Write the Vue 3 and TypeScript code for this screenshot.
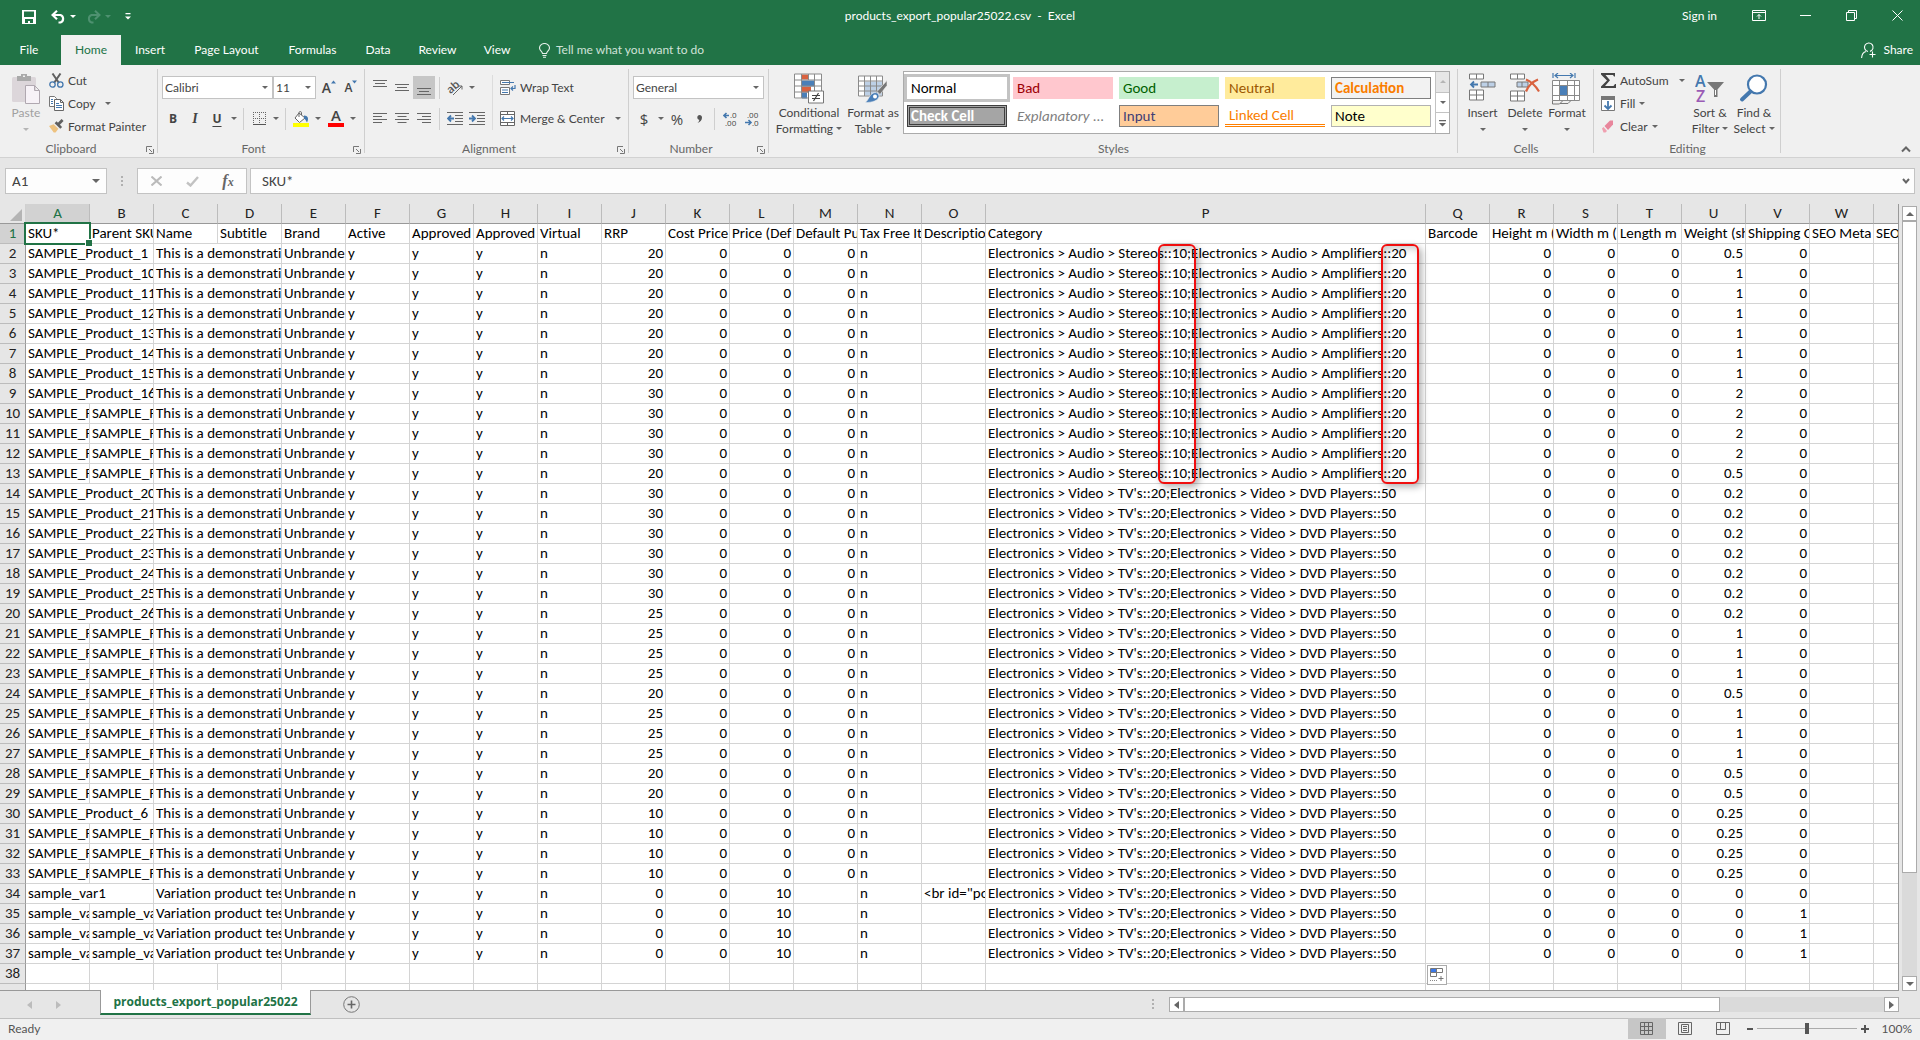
<script setup lang="ts">
interface Column {
  letter: string
  title: string
  wide?: boolean
}

interface Product {
  sku: string
  parent: string
  name: string
  active: string
  rrp: string
  price: string
  purchase: string
  description: string
  category: string
  weight: string
  shipping: string
}

const columns: Column[] = [
  { letter: 'A', title: 'SKU*' },
  { letter: 'B', title: 'Parent SKU' },
  { letter: 'C', title: 'Name' },
  { letter: 'D', title: 'Subtitle' },
  { letter: 'E', title: 'Brand' },
  { letter: 'F', title: 'Active' },
  { letter: 'G', title: 'Approved' },
  { letter: 'H', title: 'Approved' },
  { letter: 'I', title: 'Virtual' },
  { letter: 'J', title: 'RRP' },
  { letter: 'K', title: 'Cost Price' },
  { letter: 'L', title: 'Price (Def' },
  { letter: 'M', title: 'Default Pu' },
  { letter: 'N', title: 'Tax Free It' },
  { letter: 'O', title: 'Descriptio' },
  { letter: 'P', title: 'Category', wide: true },
  { letter: 'Q', title: 'Barcode' },
  { letter: 'R', title: 'Height m (' },
  { letter: 'S', title: 'Width m (' },
  { letter: 'T', title: 'Length m' },
  { letter: 'U', title: 'Weight (sh' },
  { letter: 'V', title: 'Shipping C' },
  { letter: 'W', title: 'SEO Meta' },
  { letter: '', title: 'SEO' },
]

const audio = 'Electronics > Audio > Stereos::10;Electronics > Audio > Amplifiers::20'
const video = "Electronics > Video > TV's::20;Electronics > Video > DVD Players::50"

function demo(suffix: string, rrp: number, weight: string, category: string): Product {
  return {
    sku: suffix ? 'SAMPLE_Product_' + suffix : 'SAMPLE_P',
    parent: suffix ? '' : 'SAMPLE_P',
    name: 'This is a demonstrati',
    active: 'y',
    rrp: String(rrp),
    price: '0',
    purchase: '0',
    description: '',
    category,
    weight,
    shipping: '0',
  }
}

function variation(first: boolean): Product {
  return {
    sku: first ? 'sample_var1' : 'sample_va',
    parent: first ? '' : 'sample_va',
    name: 'Variation product tes',
    active: first ? 'n' : 'y',
    rrp: '0',
    price: '10',
    purchase: '',
    description: first ? '<br id="po' : '',
    category: video,
    weight: '0',
    shipping: first ? '0' : '1',
  }
}

const products: Product[] = [
  demo('1', 20, '0.5', audio),
  ...['10', '11', '12', '13', '14', '15'].map((s) => demo(s, 20, '1', audio)),
  demo('16', 30, '2', audio),
  demo('', 30, '2', audio),
  demo('', 30, '2', audio),
  demo('', 30, '2', audio),
  demo('', 20, '0.5', audio),
  ...['20', '21', '22', '23', '24', '25'].map((s) => demo(s, 30, '0.2', video)),
  demo('26', 25, '0.2', video),
  demo('', 25, '1', video),
  demo('', 25, '1', video),
  demo('', 25, '1', video),
  demo('', 20, '0.5', video),
  demo('', 25, '1', video),
  demo('', 25, '1', video),
  demo('', 25, '1', video),
  demo('', 20, '0.5', video),
  demo('', 20, '0.5', video),
  demo('6', 10, '0.25', video),
  demo('', 10, '0.25', video),
  demo('', 10, '0.25', video),
  demo('', 10, '0.25', video),
  variation(true),
  variation(false),
  variation(false),
  variation(false),
]

const tabs = [
  { label: 'File', cls: 'tab-file' },
  { label: 'Home', cls: 'tab-home' },
  { label: 'Insert', cls: 'tab-insert' },
  { label: 'Page Layout', cls: 'tab-page' },
  { label: 'Formulas', cls: 'tab-formulas' },
  { label: 'Data', cls: 'tab-data' },
  { label: 'Review', cls: 'tab-review' },
  { label: 'View', cls: 'tab-view' },
]

const styles = [
  { label: 'Normal', cls: 'normal' },
  { label: 'Bad', cls: 'bad' },
  { label: 'Good', cls: 'good' },
  { label: 'Neutral', cls: 'neutral' },
  { label: 'Calculation', cls: 'calculation' },
  { label: 'Check Cell', cls: 'check' },
  { label: 'Explanatory ...', cls: 'explanatory' },
  { label: 'Input', cls: 'input' },
  { label: 'Linked Cell', cls: 'linked' },
  { label: 'Note', cls: 'note' },
]
</script>

<template>
  <div class="app">
    <header class="top">
      <div class="titlebar">
        <div class="quick">
          <button class="qbtn save" aria-label="Save">
            <svg width="14" height="14" viewBox="0 0 14 14"><path d="M0 0h14v14H0z" fill="#fff" /><path d="M2 1.500h10V7H2zM3 9h8v4H8v-2H6v2H3z" fill="#217346" /></svg>
          </button>
          <button class="qbtn undo" aria-label="Undo">
            <svg width="15" height="14" viewBox="0 0 15 14"><path d="M2 5h7.500a4 4 0 0 1 0 7.500H7.500M6 .8 1.500 5 6 9.200" fill="none" stroke="#fff" stroke-width="2.200" /></svg>
          </button>
          <span class="caret light"></span>
          <button class="qbtn redo" aria-label="Redo">
            <svg width="15" height="14" viewBox="0 0 15 14"><path d="M13 5H5.500a4 4 0 0 0 0 7.500H7.500M9 .8 13.500 5 9 9.200" fill="none" stroke="#4e9170" stroke-width="2" /></svg>
          </button>
          <span class="caret faint"></span>
          <button class="qbtn custom" aria-label="Customize Quick Access Toolbar">
            <svg width="6" height="7" viewBox="0 0 6 7"><path d="M.5 0h5v1.300h-5zM0 3.500h6L3 6.500z" fill="#fff" /></svg>
          </button>
        </div>
        <h1 class="doc-title">products_export_popular25022.csv&nbsp; -&nbsp; Excel</h1>
        <div class="window-controls">
          <a class="signin" href="#">Sign in</a>
          <button class="wbtn" aria-label="Ribbon Display Options">
            <svg width="14" height="11" viewBox="0 0 14 11"><path d="M.5.5h13v10H.5zM.5 2.500h13M7 9V4.500M5 6.500l2-2 2 2" fill="none" stroke="#fff" /></svg>
          </button>
          <button class="wbtn" aria-label="Minimize">
            <svg width="11" height="11" viewBox="0 0 11 11"><path d="M0 5.500h11" stroke="#fff" /></svg>
          </button>
          <button class="wbtn" aria-label="Restore">
            <svg width="11" height="11" viewBox="0 0 11 11"><path d="M.5 2.500h8v8h-8zM2.500 2.500v-2h8v8h-2" fill="none" stroke="#fff" /></svg>
          </button>
          <button class="wbtn" aria-label="Close">
            <svg width="11" height="11" viewBox="0 0 11 11"><path d="M.5.5l10 10M10.500.5l-10 10" stroke="#fff" /></svg>
          </button>
        </div>
      </div>
      <nav class="tabs">
        <button v-for="t in tabs" :key="t.label" class="tab" :class="t.cls">{{ t.label }}</button>
        <button class="tell">
          <svg width="11" height="15" viewBox="0 0 11 15"><path d="M3.500 10.500c0-2-3-3-3-5.500a5 4.500 0 0 1 10 0c0 2.500-3 3.500-3 5.500zM3.500 12.500h4M4 14.300h3" fill="none" stroke="#e4efe9" stroke-width="1.100" /></svg>
          <span>Tell me what you want to do</span>
        </button>
        <button class="share">
          <svg width="16" height="17" viewBox="0 0 16 17"><path d="M7 9.500A4.300 4.300 0 1 1 9 9.400M.6 16c.2-4 2-6 4.400-6.500M11.500 9.500v6M8.500 12.500h6" fill="none" stroke="#fff" stroke-width="1.100" /></svg>
          <span>Share</span>
        </button>
      </nav>
    </header>

    <section class="ribbon">
      <div class="group g-clipboard">
        <div class="body">
          <button class="big paste">
            <svg width="30" height="32" viewBox="0 0 30 32"><rect x="1" y="4" width="24" height="25" rx="1.500" fill="#dcd6da" /><path d="M6 3h4V1h6v2h4v5H6z" fill="#a9a9a9" /><path d="M12 2.500h2v1.500h-2z" fill="#f0f0f0" /><path d="M14.500 12.500h9l5 5v13h-14zM23.500 12.500v5h5" fill="#f7f2f7" stroke="#b0a8b0" /></svg>
            <span>Paste</span>
            <i class="caret pale"></i>
          </button>
          <div class="stack">
            <button class="small">
              <svg width="15" height="15" viewBox="0 0 15 15"><path d="M3.500.5 10 10M11.500.5 5 10" stroke="#606060" stroke-width="2" /><circle cx="3.500" cy="11.500" r="2.700" fill="none" stroke="#4478ae" stroke-width="1.300" /><circle cx="11.300" cy="11.500" r="2.700" fill="none" stroke="#4478ae" stroke-width="1.300" /></svg>
              <span>Cut</span>
            </button>
            <button class="small">
              <svg width="15" height="15" viewBox="0 0 15 15"><path d="M.5.5h5l2 2v8h-7z" fill="#fff" stroke="#777" /><path d="M5.500 3.500h6l3 3v8h-9zM11.500 3.500v3h3" fill="#fff" stroke="#666" /><path d="M2 3.500h2M2 5.500h2M2 7.500h2M7 7.500h3M7 9.500h6M7 11.500h6" stroke="#4478ae" /></svg>
              <span>Copy</span><i class="caret far"></i>
            </button>
            <button class="small">
              <svg width="16" height="15" viewBox="0 0 16 15"><path d="M0 7l5-2 5 5-3 4H5z" fill="#eec27f" /><path d="M6 4l2-2 6 6-2 2z" fill="#606060" /><path d="M10 5l4.500-4.500" stroke="#606060" stroke-width="3" /></svg>
              <span>Format Painter</span>
            </button>
          </div>
        </div>
        <div class="label">Clipboard<svg class="launch" width="8" height="8" viewBox="0 0 8 8"><path d="M.5 6V.5H6M3 3l3 3M7.500 3v4.500H3" fill="none" stroke="#777" /></svg></div>
      </div>

      <div class="group g-font">
        <div class="body rows">
          <div class="row">
            <span class="combo combo-font"><select aria-label="Font"><option>Calibri</option></select><i class="caret"></i></span>
            <span class="combo combo-size"><select aria-label="Font size"><option>11</option></select><i class="caret"></i></span>
            <button class="tool grow" aria-label="Increase Font Size"><b>A</b><svg width="5" height="4" viewBox="0 0 5 4"><path d="M0 3.500 2.500.5 5 3.500z" fill="#4478ae" /></svg></button>
            <button class="tool shrink" aria-label="Decrease Font Size"><b>A</b><svg width="5" height="4" viewBox="0 0 5 4"><path d="M0 .5 2.500 3.500 5 .5z" fill="#4478ae" /></svg></button>
          </div>
          <div class="row">
            <button class="tool bold">B</button>
            <button class="tool italic">I</button>
            <button class="tool under">U</button>
            <button class="drop" aria-label="Underline options"><i class="caret"></i></button>
            <span class="sep"></span>
            <button class="tool" aria-label="Borders"><svg width="13" height="13" viewBox="0 0 13 13"><path d="M0 .5h13M0 6.500h13M.5 0v13M6.500 0v13M12.500 0v13" stroke="#666" stroke-dasharray="1 1" /><path d="M0 12.500h13" stroke="#555" /></svg></button>
            <button class="drop" aria-label="Border options"><i class="caret"></i></button>
            <span class="sep"></span>
            <button class="tool" aria-label="Fill Color"><svg width="17" height="16" viewBox="0 0 17 16"><path d="M6 2l6 5-5.500 4.500L2 7z" fill="#fff" stroke="#666" /><path d="M6 6V1.500C6 .3 8.500.3 8.500 1.500V4" fill="none" stroke="#666" /><path d="M11 4.500c4 0 5 3 3 7-1-1-1-3-3-4z" fill="#4478ae" /><path d="M0 12h16v4H0z" fill="#ff0" /></svg></button>
            <button class="drop" aria-label="Fill options"><i class="caret"></i></button>
            <button class="tool colour" aria-label="Font Color"><b>A</b></button>
            <button class="drop" aria-label="Font color options"><i class="caret"></i></button>
          </div>
        </div>
        <div class="label">Font<svg class="launch" width="8" height="8" viewBox="0 0 8 8"><path d="M.5 6V.5H6M3 3l3 3M7.500 3v4.500H3" fill="none" stroke="#777" /></svg></div>
      </div>

      <div class="group g-align">
        <div class="body">
          <div class="rows align-left">
            <div class="row">
              <button class="tool" aria-label="Top Align"><svg width="14" height="15" viewBox="0 0 14 15"><path d="M0 .5h14M2 3.500h10M0 6.500h14" stroke="#666" /></svg></button>
              <button class="tool" aria-label="Middle Align"><svg width="14" height="15" viewBox="0 0 14 15"><path d="M0 4.500h14M2 7.500h10M0 10.500h14" stroke="#666" /></svg></button>
              <button class="tool pressed" aria-label="Bottom Align"><svg width="14" height="15" viewBox="0 0 14 15"><path d="M0 8.500h14M2 11.500h10M0 14.500h14" stroke="#666" /></svg></button>
              <span class="sep"></span>
              <button class="tool" aria-label="Orientation"><svg width="17" height="16" viewBox="0 0 17 16"><text x="0" y="11" transform="rotate(-42 6 8)" font-family="Open Sans, sans-serif" font-size="11" font-weight="600" fill="#555">ab</text><path d="M6 15 15 6M11.500 6H15v3.500" fill="none" stroke="#666" /></svg></button>
              <button class="drop" aria-label="Orientation options"><i class="caret"></i></button>
            </div>
            <div class="row">
              <button class="tool" aria-label="Align Left"><svg width="14" height="11" viewBox="0 0 14 11"><path d="M0 .5h14M0 3.500h9M0 6.500h14M0 9.500h9" stroke="#666" /></svg></button>
              <button class="tool" aria-label="Center"><svg width="14" height="11" viewBox="0 0 14 11"><path d="M0 .5h14M2.500 3.500h9M0 6.500h14M2.500 9.500h9" stroke="#666" /></svg></button>
              <button class="tool" aria-label="Align Right"><svg width="14" height="11" viewBox="0 0 14 11"><path d="M0 .5h14M5 3.500h9M0 6.500h14M5 9.500h9" stroke="#666" /></svg></button>
              <span class="sep"></span>
              <button class="tool" aria-label="Decrease Indent"><svg width="16" height="13" viewBox="0 0 16 13"><path d="M0 .5h16M8 3.500h8M8 6.500h8M8 9.500h8M0 12.500h16" stroke="#666" /><path d="M7 6.500H1M4 3.500l-3 3 3 3" fill="none" stroke="#4478ae" stroke-width="1.800" /></svg></button>
              <button class="tool" aria-label="Increase Indent"><svg width="16" height="13" viewBox="0 0 16 13"><path d="M0 .5h16M8 3.500h8M8 6.500h8M8 9.500h8M0 12.500h16" stroke="#666" /><path d="M0 6.500h6M3 3.500l3 3-3 3" fill="none" stroke="#4478ae" stroke-width="1.800" /></svg></button>
            </div>
          </div>
          <div class="rows align-right">
            <button class="row wide">
              <svg width="16" height="15" viewBox="0 0 16 15"><path d="M.5.5h9v4h-9zM.5 7.500h9v7h-9z" fill="#fff" stroke="#777" /><path d="M2 2.500h12M2 10h6M2 12.500h6M15 5v3.500h-4M13 6.500l-2 2 2 2" fill="none" stroke="#4478ae" stroke-width="1.200" /></svg>
              <span>Wrap Text</span>
            </button>
            <button class="row wide">
              <svg width="16" height="15" viewBox="0 0 16 15"><path d="M.5.5h14v14H.5zM.5 3.500h14M.5 11.500h14M7.500.5v3M7.500 11.500v3" fill="#fff" stroke="#666" /><path d="M2 7.500h11M4 5.500l-2 2 2 2M11 5.500l2 2-2 2" fill="none" stroke="#4478ae" stroke-width="1.200" /></svg>
              <span>Merge &amp; Center</span><i class="caret"></i>
            </button>
          </div>
        </div>
        <div class="label">Alignment<svg class="launch" width="8" height="8" viewBox="0 0 8 8"><path d="M.5 6V.5H6M3 3l3 3M7.500 3v4.500H3" fill="none" stroke="#777" /></svg></div>
      </div>

      <div class="group g-number">
        <div class="body rows">
          <div class="row">
            <span class="combo combo-number"><select aria-label="Number format"><option>General</option></select><i class="caret"></i></span>
          </div>
          <div class="row">
            <button class="tool sym">$</button>
            <button class="drop" aria-label="Accounting options"><i class="caret"></i></button>
            <button class="tool sym">%</button>
            <button class="tool comma" aria-label="Comma Style"><svg width="5" height="8" viewBox="0 0 5 8"><path d="M2.500 0C4 0 5 1 5 2.500 5 5 3.500 7 .5 8 2 6.500 2.300 5.500 2.200 4.700 1 4.700.3 3.500.3 2.300.3 1 1.300 0 2.500 0z" fill="#555" /></svg></button>
            <span class="sep"></span>
            <button class="tool dec" aria-label="Increase Decimal"><svg width="15" height="14" viewBox="0 0 15 14"><path d="M6 3.500H1M3.500 1 1 3.500 3.500 6" fill="none" stroke="#4478ae" stroke-width="1.600" /><g fill="#444" font-family="Open Sans, sans-serif" font-size="8"><text x="7" y="6">.0</text><text x="2" y="14">.00</text></g></svg></button>
            <button class="tool dec" aria-label="Decrease Decimal"><svg width="15" height="14" viewBox="0 0 15 14"><path d="M0 10.500h6M3.500 8 6 10.500 3.500 13" fill="none" stroke="#4478ae" stroke-width="1.600" /><g fill="#444" font-family="Open Sans, sans-serif" font-size="8"><text x="2" y="6">.00</text><text x="7" y="14">.0</text></g></svg></button>
          </div>
        </div>
        <div class="label">Number<svg class="launch" width="8" height="8" viewBox="0 0 8 8"><path d="M.5 6V.5H6M3 3l3 3M7.500 3v4.500H3" fill="none" stroke="#777" /></svg></div>
      </div>

      <div class="group g-styles">
        <div class="body">
          <button class="big cond">
            <svg width="30" height="31" viewBox="0 0 30 31"><path d="M.5.500h27v25H.500z" fill="#fff" /><path d="M8 1h6v5H8zM8 13h9v6H8z" fill="#d9623f" /><path d="M8 7h12v6H8zM8 19h5v6H8z" fill="#4a7fb8" /><path d="M.5.500h27v24H.500zM7.500.500v24M14.500.500v6M20.500.500v24M.5 6.500h27M.5 12.500h27M.5 18.500h27" fill="none" stroke="#8a8a8a" /><path d="M14.500 17.500h15v12h-15z" fill="#fff" stroke="#777" /><path d="M18 22h8M18 25h8M24.500 19.500l-5 8" stroke="#444" stroke-width="1.200" /></svg>
            <span>Conditional<br />Formatting <i class="caret"></i></span>
          </button>
          <button class="big table-style">
            <svg width="30" height="31" viewBox="0 0 30 31"><path d="M.5 2.500h24v20H.5z" fill="#fff" /><path d="M7 8h18v14H7z" fill="#bdd0e6" /><path d="M.5 2.500h24v20H.5zM6.500 2.500v20M12.500 2.500v20M18.500 2.500v20M.5 7.500h24M.5 12.500h24M.5 17.500h24" fill="none" stroke="#8a8a8a" /><path d="M29 7v5l-7 9-3-3z" fill="#777" stroke="#f0f0f0" stroke-width=".6" /><path d="M17 19c3 0 4 2 4 4-1 4-6 6-14 6 4-2 4-9 10-10z" fill="#4a7fb8" stroke="#f0f0f0" stroke-width=".6" /><circle cx="17" cy="23" r="2" fill="#fff" /></svg>
            <span>Format as<br />Table <i class="caret"></i></span>
          </button>
          <div class="gallery">
            <div class="swatches">
              <button v-for="s in styles" :key="s.label" class="swatch" :class="s.cls">{{ s.label }}</button>
            </div>
            <div class="gallery-nav">
              <button class="off" aria-label="Previous styles"><i class="caret up pale"></i></button>
              <button aria-label="Next styles"><i class="caret"></i></button>
              <button aria-label="More styles"><svg width="7" height="7" viewBox="0 0 7 7"><path d="M0 0h7v1.300H0zM0 3h7L3.500 6.500z" fill="#666" /></svg></button>
            </div>
          </div>
        </div>
        <div class="label">Styles</div>
      </div>

      <div class="group g-cells">
        <div class="body">
          <button class="big insert">
            <svg width="28" height="31" viewBox="0 0 28 31"><path d="M.5.500h14v5H.500zM7.500.500v5M.5 16.500h14v10H.500zM7.500 16.500v10M.5 21.500h14" fill="#fff" stroke="#777" /><path d="M12 8.500h14v5H12zM19 8.500v5" fill="#bdd0e6" stroke="#777" /><path d="M9 11H2M5 8l-3 3 3 3" fill="none" stroke="#4478ae" stroke-width="1.800" /></svg>
            <span>Insert</span><i class="caret"></i>
          </button>
          <button class="big delete">
            <svg width="30" height="31" viewBox="0 0 30 31"><path d="M.5.500h14v5H.500zM7.500.500v5M.5 17.500h14v10H.500zM7.500 17.500v10M.5 22.500h14" fill="#fff" stroke="#777" /><path d="M7 8.500h11v5H7zM12 8.500v5" fill="#bdd0e6" stroke="#777" /><path d="M16 6c5 2 10 7 13 12M28 6c-5 2-10 7-12 12" fill="none" stroke="#d9623f" stroke-width="2.200" /></svg>
            <span>Delete</span><i class="caret"></i>
          </button>
          <button class="big format">
            <svg width="30" height="32" viewBox="0 0 30 32"><path d="M1 0v5M23 0v5M3 2.500h18M6 0 3 2.500 6 5M18 0l3 2.500L18 5" fill="none" stroke="#4478ae" stroke-width="1.200" /><path d="M.5 7.500h27v20H.5zM7.500 7.500v20M15.500 7.500v20M22.500 7.500v20M.5 12.500h27M.5 22.500h27" fill="#fff" stroke="#8a8a8a" /><path d="M8 13h7v9H8z" fill="#4a7fb8" /><path d="M.5 27.500v3.500h7l3-3M8 30.500h8l3-3" fill="none" stroke="#777" /></svg>
            <span>Format</span><i class="caret"></i>
          </button>
        </div>
        <div class="label">Cells</div>
      </div>

      <div class="group g-editing">
        <div class="body">
          <div class="stack">
            <button class="small autosum">
              <svg width="15" height="15" viewBox="0 0 15 15"><path d="M0 0h14v3.500h-1L12 2H4.500L9 7.200 4 13h8.500L14 11h1v4H0v-1.500L6 7.500 0 1.500z" fill="#444" /></svg>
              <span>AutoSum</span><i class="caret far"></i>
            </button>
            <button class="small">
              <svg width="15" height="16" viewBox="0 0 15 16"><path d="M.5.500h13v14H.500z" fill="#fff" stroke="#777" /><path d="M0 0h14v4H0z" fill="#777" /><path d="M7 5v8M3.500 9.500 7 13l3.500-3.500" fill="none" stroke="#4478ae" stroke-width="1.800" /></svg>
              <span>Fill</span><i class="caret"></i>
            </button>
            <button class="small">
              <svg width="15" height="15" viewBox="0 0 15 15"><path d="M3.500 7 9 1.500h3v4L7 11z" fill="#e8869c" /><path d="M1 9.500 2.500 8 6 12l-1.500 1.500h-2z" fill="#f0a0b0" /></svg>
              <span>Clear</span><i class="caret"></i>
            </button>
          </div>
          <button class="big sort">
            <svg width="30" height="31" viewBox="0 0 30 31"><g font-family="Open Sans, sans-serif" font-weight="600" font-size="16"><text x="0" y="13" fill="#4478ae">A</text><text x="1" y="28" fill="#9a5bb5">Z</text></g><path d="M12 8.500h17L22.500 16v7.500h-3.500V16z" fill="#777" /><path d="M20.500 16.500v5" stroke="#fff" /></svg>
            <span>Sort &amp;<br />Filter <i class="caret"></i></span>
          </button>
          <button class="big find">
            <svg width="30" height="31" viewBox="0 0 30 31"><circle cx="18" cy="11" r="9" fill="#fff" stroke="#4478ae" stroke-width="2.200" /><path d="M11.500 18 3 26" stroke="#4478ae" stroke-width="4" stroke-linecap="round" /></svg>
            <span>Find &amp;<br />Select <i class="caret"></i></span>
          </button>
        </div>
        <div class="label">Editing</div>
      </div>
      <button class="collapse" aria-label="Collapse the Ribbon">
        <svg width="10" height="7" viewBox="0 0 10 7"><path d="M1 5.500l4-4 4 4" fill="none" stroke="#666" stroke-width="2" /></svg>
      </button>
    </section>

    <section class="formula-bar">
      <div class="namebox"><input aria-label="Name Box" value="A1" /><i class="caret big-caret"></i></div>
      <svg class="grip" width="2" height="11" viewBox="0 0 2 11"><path d="M0 0h2v2H0zM0 4h2v2H0zM0 8h2v2H0z" fill="#b0b0b0" /></svg>
      <div class="fx">
        <button aria-label="Cancel"><svg width="11" height="10" viewBox="0 0 11 10"><path d="M.5.500l10 9M10.500.500l-10 9" stroke="#bbb" stroke-width="2" /></svg></button>
        <button aria-label="Enter"><svg width="13" height="11" viewBox="0 0 13 11"><path d="M1 6.500l3.500 3L12 1" fill="none" stroke="#c2c2c2" stroke-width="2.400" /></svg></button>
        <button class="fxbtn" aria-label="Insert Function"><em>f</em><sub>x</sub></button>
      </div>
      <div class="formula">
        <input aria-label="Formula" value="SKU*" />
        <svg width="8" height="7" viewBox="0 0 8 7"><path d="M1 1l3 3.500L7 1" fill="none" stroke="#666" stroke-width="2" /></svg>
      </div>
    </section>

    <main class="work">
      <div class="sheet">
        <table class="grid">
          <colgroup>
            <col class="c-head" />
            <col v-for="(c, i) in columns" :key="i" :class="c.wide ? 'c-wide' : 'c-std'" />
          </colgroup>
          <thead>
            <tr>
              <th class="corner"><svg width="12" height="12" viewBox="0 0 12 12"><path d="M12 0v12H0z" fill="#b4b4b4" /></svg></th>
              <th v-for="(c, i) in columns" :key="i" :class="{ picked: i === 0 }">{{ c.letter }}</th>
            </tr>
          </thead>
          <tbody>
            <tr>
              <th class="picked">1</th>
              <td v-for="(c, i) in columns" :key="i">{{ c.title }}</td>
            </tr>
            <tr v-for="(p, r) in products" :key="r">
              <th>{{ r + 2 }}</th>
              <td :colspan="p.parent ? 1 : 2">{{ p.sku }}</td>
              <td v-if="p.parent">{{ p.parent }}</td>
              <td colspan="2">{{ p.name }}</td>
              <td>Unbrande</td>
              <td>{{ p.active }}</td>
              <td>y</td>
              <td>y</td>
              <td>n</td>
              <td class="num">{{ p.rrp }}</td>
              <td class="num">0</td>
              <td class="num">{{ p.price }}</td>
              <td class="num">{{ p.purchase }}</td>
              <td>n</td>
              <td>{{ p.description }}</td>
              <td>{{ p.category }}</td>
              <td></td>
              <td class="num">0</td>
              <td class="num">0</td>
              <td class="num">0</td>
              <td class="num">{{ p.weight }}</td>
              <td class="num">{{ p.shipping }}</td>
              <td></td>
              <td></td>
            </tr>
            <tr v-for="n in [38, 39]" :key="n">
              <th>{{ n === 38 ? n : '' }}</th>
              <td v-for="(c, i) in columns" :key="i"></td>
            </tr>
          </tbody>
        </table>
        <div class="cursor"></div>
        <div class="callout first"></div>
        <div class="callout second"></div>
        <button class="autofill" aria-label="Auto Fill Options">
          <svg width="14" height="14" viewBox="0 0 14 14"><path d="M.5.500h12v4H.500zM.5 4.500h6v4H.500zM6.500.500v4" fill="#fff" stroke="#777" /><path d="M1 1h5v3H1z" fill="#3b78e7" /><path d="M0 12.500h7" stroke="#888" stroke-dasharray="1 1" /><path d="M8.500 10.500h5M11 8v5" stroke="#777" /></svg>
        </button>
      </div>
      <div class="vscroll">
        <button aria-label="Scroll up"><i class="caret up big-caret"></i></button>
        <div class="vthumb"></div>
        <button aria-label="Scroll down"><i class="caret big-caret"></i></button>
      </div>
    </main>

    <section class="sheetbar">
      <button class="nav prev" aria-label="Previous sheet"><svg width="5" height="8" viewBox="0 0 5 8"><path d="M5 0v8L0 4z" fill="#bcbcbc" /></svg></button>
      <button class="nav next" aria-label="Next sheet"><svg width="5" height="8" viewBox="0 0 5 8"><path d="M0 0v8l5-4z" fill="#bcbcbc" /></svg></button>
      <button class="sheet-tab">products_export_popular25022</button>
      <button class="add" aria-label="New sheet"><svg width="17" height="17" viewBox="0 0 17 17"><circle cx="8.500" cy="8.500" r="7.800" fill="none" stroke="#777" /><path d="M4.500 8.500h8M8.500 4.500v8" stroke="#666" stroke-width="1.600" /></svg></button>
      <svg class="grip hgrip" width="2" height="11" viewBox="0 0 2 11"><path d="M0 0h2v2H0zM0 4h2v2H0zM0 8h2v2H0z" fill="#b0b0b0" /></svg>
      <div class="hscroll">
        <button aria-label="Scroll left"><svg width="5" height="8" viewBox="0 0 5 8"><path d="M5 0v8L0 4z" fill="#666" /></svg></button>
        <div class="hthumb"></div>
        <button class="end" aria-label="Scroll right"><svg width="5" height="8" viewBox="0 0 5 8"><path d="M0 0v8l5-4z" fill="#666" /></svg></button>
      </div>
    </section>

    <footer class="status">
      <span class="ready">Ready</span>
      <button class="view on" aria-label="Normal view"><svg width="14" height="13" viewBox="0 0 14 13"><path d="M.5.500h12v12H.500zM4.500.500v12M8.500.500v12M.5 4.500h12M.5 8.500h12" fill="none" stroke="#666" /></svg></button>
      <button class="view" aria-label="Page Layout view"><svg width="14" height="13" viewBox="0 0 14 13"><path d="M.5.500h13v12H.500zM3.500 2.500h7v8h-7zM5 4.500h4M5 6.500h4M5 8.500h4" fill="none" stroke="#666" /></svg></button>
      <button class="view" aria-label="Page Break Preview"><svg width="14" height="13" viewBox="0 0 14 13"><path d="M.5.500h13v12H.500zM4.500.500v7h5v-7M.5 7.500h4" fill="none" stroke="#666" /></svg></button>
      <button class="zoom-btn" aria-label="Zoom out"><svg width="8" height="8" viewBox="0 0 8 8"><path d="M1 4h6" stroke="#555" stroke-width="2" /></svg></button>
      <input class="zoom" type="range" min="10" max="190" value="100" aria-label="Zoom" />
      <button class="zoom-btn" aria-label="Zoom in"><svg width="8" height="8" viewBox="0 0 8 8"><path d="M0 4h8M4 0v8" stroke="#555" stroke-width="2" /></svg></button>
      <span class="percent">100%</span>
    </footer>
  </div>
</template>

<style>
body {
  margin: 0;
  overflow: hidden;
}
</style>

<style scoped>
.app {
  display: flex;
  flex-direction: column;
  height: 100vh;
  background: #e6e6e6;
  color: #444;
  font: 12px/16px Lato, "Open Sans", sans-serif;
}
* {
  box-sizing: border-box;
}
button,
input,
select {
  margin: 0;
  padding: 0;
  border: 0;
  border-radius: 0;
  outline: 0;
  background: none;
  color: inherit;
  font: inherit;
}
svg {
  display: block;
  flex: none;
}
.caret {
  display: inline-block;
  flex: none;
  width: 0;
  height: 0;
  border: 3px solid transparent;
  border-top-color: #666;
  border-bottom: 0;
}
.caret.up {
  border-top: 0;
  border-bottom: 3px solid #666;
}
.caret.light {
  border-top-color: #fff;
}
.caret.faint {
  border-top-color: #4e9170;
}
.caret.pale {
  border-top-color: #b5b5b5;
  border-bottom-color: #b5b5b5;
}
.caret.big-caret {
  border-width: 4px;
  border-bottom-width: 0;
}
.caret.up.big-caret {
  border-top-width: 0;
  border-bottom-width: 4px;
}

/* Title bar and tabs */
.top {
  flex: none;
  background: #217346;
  color: #fff;
}
.titlebar {
  display: grid;
  grid-template-columns: 1fr auto 1fr;
  height: 35px;
}
.quick {
  display: flex;
  align-items: center;
  height: 33px;
  padding-left: 22px;
}
.undo {
  margin-left: 15px;
}
.redo {
  margin-left: 10px;
}
.custom {
  margin-left: 14px;
}
.quick .caret {
  margin-left: 4px;
}
.doc-title {
  margin: 0;
  font-size: 12px;
  font-weight: 400;
  line-height: 31px;
}
.window-controls {
  display: flex;
  align-items: center;
  justify-content: flex-end;
  height: 31px;
}
.signin {
  margin-right: 19px;
  color: #fff;
  text-decoration: none;
}
.wbtn {
  display: flex;
  justify-content: center;
  align-items: center;
  width: 46px;
  height: 30px;
}
.tabs {
  display: flex;
  height: 30px;
}
.tab {
  flex: none;
  text-align: center;
}
.tab-file {
  width: 58px;
  margin-right: 3px;
}
.tab-home {
  width: 60px;
  background: #f0f0f0;
  color: #217346;
}
.tab-insert {
  width: 58px;
}
.tab-page {
  width: 95px;
}
.tab-formulas {
  width: 77px;
}
.tab-data {
  width: 54px;
}
.tab-review {
  width: 65px;
}
.tab-view {
  width: 54px;
}
.tell {
  display: flex;
  align-items: center;
  gap: 6px;
  margin-left: 15px;
  color: #cfe2d8;
}
.share {
  display: flex;
  align-items: center;
  gap: 6px;
  margin-left: auto;
  padding-right: 7px;
}

/* Ribbon */
.ribbon {
  display: flex;
  flex: none;
  height: 93px;
  padding-top: 4px;
  border-bottom: 1px solid #d2d2d2;
  background: #f0f0f0;
}
.group {
  flex: none;
  background: linear-gradient(#cfcfcf, #cfcfcf) right top / 1px 84px no-repeat;
}
.g-clipboard {
  width: 158px;
}
.g-font {
  width: 207px;
}
.g-align {
  width: 264px;
}
.g-number {
  width: 140px;
}
.g-styles {
  width: 689px;
}
.g-cells {
  width: 136px;
}
.g-editing {
  width: 187px;
}
.body {
  display: flex;
  height: 71px;
}
.label {
  position: relative;
  padding-right: 16px;
  color: #666;
  line-height: 17px;
  text-align: center;
}
.g-styles .label,
.g-cells .label,
.g-editing .label {
  padding-right: 0;
}
.launch {
  position: absolute;
  right: 4px;
  top: 6px;
}
.big {
  display: flex;
  flex: none;
  flex-direction: column;
  align-items: center;
  padding-top: 4px;
  text-align: center;
  white-space: nowrap;
}
.big svg {
  height: 32px;
}
.big span {
  line-height: 16px;
}
.big > span + .caret {
  margin-top: 7px;
}
.big span .caret {
  vertical-align: 3px;
}
.paste {
  width: 38px;
  margin-left: 7px;
  color: #a0a0a0;
}
.stack {
  display: flex;
  flex-direction: column;
  padding-left: 4px;
}
.small {
  display: flex;
  align-items: center;
  gap: 4px;
  height: 23px;
  white-space: nowrap;
}
.small svg {
  width: 15px;
}
.small .far {
  margin-left: 6px;
}
.rows {
  display: flex;
  flex-direction: column;
  gap: 8px;
  padding-top: 7px;
}
.row {
  display: flex;
  align-items: center;
  height: 23px;
}
.g-font .rows,
.g-number .rows {
  padding-left: 4px;
}
.combo {
  display: flex;
  align-items: center;
  height: 23px;
  border: 1px solid #c3c3c3;
  background: #fff;
}
.combo select {
  flex: 1;
  min-width: 0;
  height: 21px;
  padding-left: 2px;
  appearance: none;
}
.combo .caret {
  margin-right: 4px;
}
.combo-font {
  width: 111px;
}
.combo-size {
  width: 43px;
}
.combo-number {
  width: 131px;
}
.tool {
  display: flex;
  flex: none;
  align-items: center;
  justify-content: center;
  width: 22px;
  height: 23px;
  color: #444;
}
.drop {
  display: flex;
  flex: none;
  align-items: center;
  justify-content: center;
  width: 11px;
  height: 23px;
}
.sep {
  flex: none;
  width: 1px;
  height: 22px;
  margin: 0 4px;
  background: #cfcfcf;
}
.grow,
.shrink,
.colour {
  font-family: "Open Sans", sans-serif;
}
.grow,
.shrink {
  align-items: flex-start;
  padding-top: 4px;
}
.grow {
  margin-left: 2px;
  font-size: 14px;
}
.shrink {
  font-size: 12px;
}
.grow b,
.shrink b {
  font-weight: 600;
}
.bold,
.under {
  font-family: "Open Sans", sans-serif;
  font-weight: 700;
}
.italic {
  font-family: "Liberation Serif", serif;
  font-size: 14px;
  font-style: italic;
  font-weight: 700;
}
.under {
  text-decoration: underline;
  text-underline-offset: 3px;
}
.colour {
  align-items: flex-start;
  margin-left: 2px;
}
.colour b {
  width: 16px;
  height: 20px;
  border-bottom: 4px solid #f00;
  font-size: 15px;
  font-weight: 600;
  text-align: center;
}
.pressed {
  background: #c6c6c6;
}
.align-left {
  width: 127px;
  padding-left: 4px;
}
.align-right {
  padding-left: 8px;
  background: linear-gradient(#dcdcdc, #dcdcdc) left 6px / 1px 55px no-repeat;
}
.wide {
  gap: 4px;
  white-space: nowrap;
}
.wide .caret {
  margin-left: 6px;
}
.sym {
  font-family: "Open Sans", sans-serif;
  font-size: 15px;
}
.cond {
  width: 70px;
  margin-left: 5px;
}
.table-style {
  width: 58px;
}
.gallery {
  display: flex;
  width: 547px;
  height: 63px;
  margin: 2px 0 0 1px;
  border: 1px solid #ababab;
  background: #fff;
}
.swatches {
  display: grid;
  grid-template-columns: repeat(5, 100px);
  grid-auto-rows: 22px;
  gap: 6px;
  flex: 1;
  padding: 5px 3px;
}
.swatch {
  padding-left: 4px;
  font-family: Carlito, Calibri, "Open Sans", sans-serif;
  font-size: 15px;
  line-height: 18px;
  text-align: left;
  white-space: nowrap;
}
.normal {
  box-shadow: 0 0 0 3px #c3c3c3;
  color: #000;
}
.bad {
  background: #ffc7ce;
  color: #9c0006;
}
.good {
  background: #c6efce;
  color: #006100;
}
.neutral {
  background: #ffeb9c;
  color: #9c5700;
}
.calculation {
  border: 1px solid #7f7f7f;
  background: #f2f2f2;
  color: #fa7d00;
  font-weight: 700;
  padding-left: 3px;
}
.check {
  border: 3px double #3f3f3f;
  background: #a5a5a5;
  color: #fff;
  font-weight: 700;
  line-height: 16px;
  padding-left: 1px;
}
.explanatory {
  color: #7f7f7f;
  font-style: italic;
}
.input {
  border: 1px solid #7f7f7f;
  background: #ffcc99;
  color: #3f3f76;
  padding-left: 3px;
}
.linked {
  border-bottom: 3px double #ff8001;
  color: #fa7d00;
}
.note {
  border: 1px solid #b2b2b2;
  background: #ffffcc;
  color: #000;
  padding-left: 3px;
}
.gallery-nav {
  display: flex;
  flex-direction: column;
  width: 14px;
  border-left: 1px solid #c3c3c3;
}
.gallery-nav button {
  display: flex;
  flex: 1;
  align-items: center;
  justify-content: center;
}
.gallery-nav button + button {
  border-top: 1px solid #c3c3c3;
}
.gallery-nav .off {
  background: #e6e6e6;
}
.insert {
  width: 43px;
  margin-left: 3px;
}
.delete,
.format {
  width: 42px;
}
.g-editing .stack {
  width: 93px;
  padding-left: 7px;
}
.sort {
  width: 46px;
}
.find {
  width: 42px;
}
.collapse {
  align-self: flex-end;
  margin: 0 9px 4px auto;
}

/* Formula bar */
.formula-bar {
  display: flex;
  flex: none;
  align-items: center;
  height: 46px;
  padding: 0 5px;
}
.namebox,
.fx,
.formula {
  display: flex;
  align-items: center;
  height: 26px;
  border: 1px solid #c3c3c3;
  background: #fdfdfd;
}
.formula-bar input {
  flex: 1;
  min-width: 0;
  font-family: Carlito, Calibri, "Open Sans", sans-serif;
  font-size: 15px;
}
.namebox {
  width: 102px;
  padding: 0 6px;
}
.grip {
  margin: 0 14px 0 14px;
}
.fx {
  width: 110px;
}
.fx button {
  display: flex;
  flex: 1;
  align-items: center;
  justify-content: center;
}
.fx .fxbtn {
  align-items: baseline;
  color: #666;
  font-family: "Liberation Serif", serif;
  font-size: 16px;
  font-weight: 700;
  font-style: italic;
}
.fxbtn sub {
  font-size: 12px;
  line-height: 12px;
  vertical-align: baseline;
}
.formula {
  flex: 1;
  margin-left: 3px;
  padding: 0 4px 0 11px;
}

/* Worksheet */
.work {
  display: flex;
  flex: 1;
  min-height: 0;
}
.sheet {
  position: relative;
  flex: 1;
  min-width: 0;
  overflow: hidden;
  border-right: 1px solid #999;
  border-bottom: 1px solid #999;
}
.grid {
  width: 1938px;
  border-spacing: 0;
  table-layout: fixed;
  background: #fff;
  color: #000;
  font-family: Carlito, Calibri, "Open Sans", sans-serif;
  font-size: 15px;
  font-variant-ligatures: none;
}
.c-head {
  width: 26px;
}
.c-std {
  width: 64px;
}
.c-wide {
  width: 440px;
}
.grid th,
.grid td {
  height: 20px;
  padding: 0;
  overflow: hidden;
  line-height: 19px;
  font-weight: 400;
  white-space: nowrap;
}
.grid td {
  padding-left: 2px;
  border-right: 1px solid #d4d4d4;
  border-bottom: 1px solid #d4d4d4;
}
.grid .num {
  padding: 0 2px 0 0;
  text-align: right;
}
.grid th {
  border-right: 1px solid #999;
  border-bottom: 1px solid #bcbcbc;
  background: #e6e6e6;
  color: #222;
}
.grid thead th {
  border-right: 1px solid #bcbcbc;
  border-bottom: 1px solid #999;
}
.grid th.picked {
  background: #d2d2d2;
  color: #217346;
}
.grid th.corner {
  border-right-color: #d0d0d0;
  padding: 2px 0 0 10px;
}
.cursor {
  position: absolute;
  left: 24px;
  top: 18px;
  width: 67px;
  height: 23px;
  border: 2px solid #217346;
}
.cursor::after {
  content: "";
  position: absolute;
  right: -3px;
  bottom: -3px;
  width: 6px;
  height: 6px;
  border: 1px solid #fff;
  border-width: 1px 0 0 1px;
  background: #217346;
}
.callout {
  position: absolute;
  top: 40px;
  width: 38px;
  height: 240px;
  border: 2px solid #f00e0e;
  border-radius: 6px;
  box-shadow: 3px 3px 7px rgba(0, 0, 0, 0.3), inset 3px 3px 7px rgba(0, 0, 0, 0.2);
}
.first {
  left: 1158px;
}
.second {
  left: 1381px;
}
.autofill {
  position: absolute;
  left: 1427px;
  top: 761px;
  display: flex;
  align-items: center;
  justify-content: center;
  width: 20px;
  height: 20px;
  border: 1px solid #ababab;
  background: #fff;
}
.vscroll {
  display: flex;
  flex: none;
  flex-direction: column;
  width: 15px;
  margin: 2px 3px 0;
  background: #dadada;
}
.vscroll button,
.hscroll button {
  display: flex;
  flex: none;
  align-items: center;
  justify-content: center;
  width: 15px;
  height: 15px;
  border: 1px solid #ababab;
  background: #fff;
}
.vthumb {
  height: 83%;
  margin-bottom: auto;
  border: 1px solid #ababab;
  background: #fff;
}

/* Sheet tabs */
.sheetbar {
  display: flex;
  flex: none;
  align-items: center;
  height: 28px;
  padding-right: 21px;
  border-bottom: 1px solid #c0c0c0;
}
.prev {
  margin-left: 27px;
}
.next {
  margin-left: 24px;
}
.sheet-tab {
  align-self: flex-start;
  width: 211px;
  height: 25px;
  margin: -1px 0 0 39px;
  border: 1px solid #999;
  border-top: 0;
  border-bottom: 2px solid #217346;
  background: #fff;
  color: #217346;
  font-family: "Open Sans", sans-serif;
  font-weight: 700;
  z-index: 1;
}
.add {
  margin-left: 32px;
}
.hgrip {
  margin: 0 15px 0 auto;
}
.hscroll {
  display: flex;
  width: 730px;
  background: #dadada;
}
.hthumb {
  width: 536px;
  margin-right: auto;
  border: 1px solid #ababab;
  background: #fff;
}

/* Status bar */
.status {
  display: flex;
  flex: none;
  align-items: center;
  height: 21px;
  padding: 0 8px 2px;
  background: #f0f0f0;
  color: #555;
}
.ready {
  margin-right: auto;
}
.view {
  display: flex;
  align-items: center;
  justify-content: center;
  width: 38px;
  height: 21px;
}
.on {
  background: #c6c6c6;
}
.zoom-btn {
  margin-left: 4px;
}
.zoom {
  width: 100px;
  height: 12px;
  margin-left: 3px;
  appearance: none;
  background: linear-gradient(#ababab, #ababab) center / 100% 1px no-repeat;
}
.zoom::-webkit-slider-thumb {
  appearance: none;
  width: 4px;
  height: 11px;
  background: #555;
}
.percent {
  width: 43px;
  text-align: right;
}
</style>
